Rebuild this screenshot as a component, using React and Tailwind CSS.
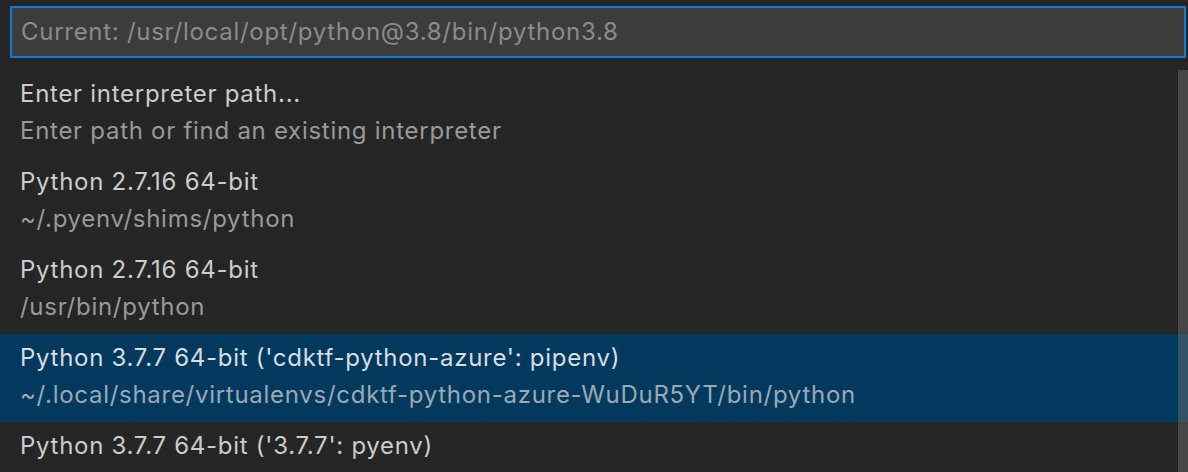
import React from "react";

const items = [
  { label: "Enter interpreter path...", desc: "Enter path or find an existing interpreter" },
  { label: "Python 2.7.16 64-bit", desc: "~/.pyenv/shims/python" },
  { label: "Python 2.7.16 64-bit", desc: "/usr/bin/python" },
  { label: "Python 3.7.7 64-bit ('cdktf-python-azure': pipenv)", desc: "~/.local/share/virtualenvs/cdktf-python-azure-WuDuR5YT/bin/python", active: true },
  { label: "Python 3.7.7 64-bit ('3.7.7': pyenv)" },
];

export default function App() {
  return (
    <div
      className="relative h-[472px] w-[1188px] overflow-hidden bg-[#252526] tracking-[0.72px]"
      style={{ fontFamily: "Inter, 'Noto Sans', sans-serif" }}
    >
      <div className="pt-[6px] pl-[10px]">
        <div className="flex h-[52px] w-[1176px] items-center border-2 border-[#0e7ad3] bg-[#3c3c3c] pl-[9px] text-[24px] text-[#8b8b8b]">
          Current: /usr/local/opt/python@3.8/bin/python3.8
        </div>
      </div>
      <div className="mt-[12px] flex flex-col">
        {items.map((it, i) => (
          <div
            key={i}
            className={`h-[88px] shrink-0 pt-[5px] pl-[20px] text-[24px] leading-[37px] ${it.active ? "bg-[#04395e]" : ""}`}
          >
            <div className={it.active ? "text-[#d6dde3]" : "text-[#cccccc]"}>{it.label}</div>
            {it.desc && (
              <div className={it.active ? "text-[#9aa9b5]" : "text-[#999999]"}>{it.desc}</div>
            )}
          </div>
        ))}
      </div>
      <div className="absolute right-0 top-[70px] bottom-0 w-[10px] bg-[#79797966]" />
    </div>
  );
}
